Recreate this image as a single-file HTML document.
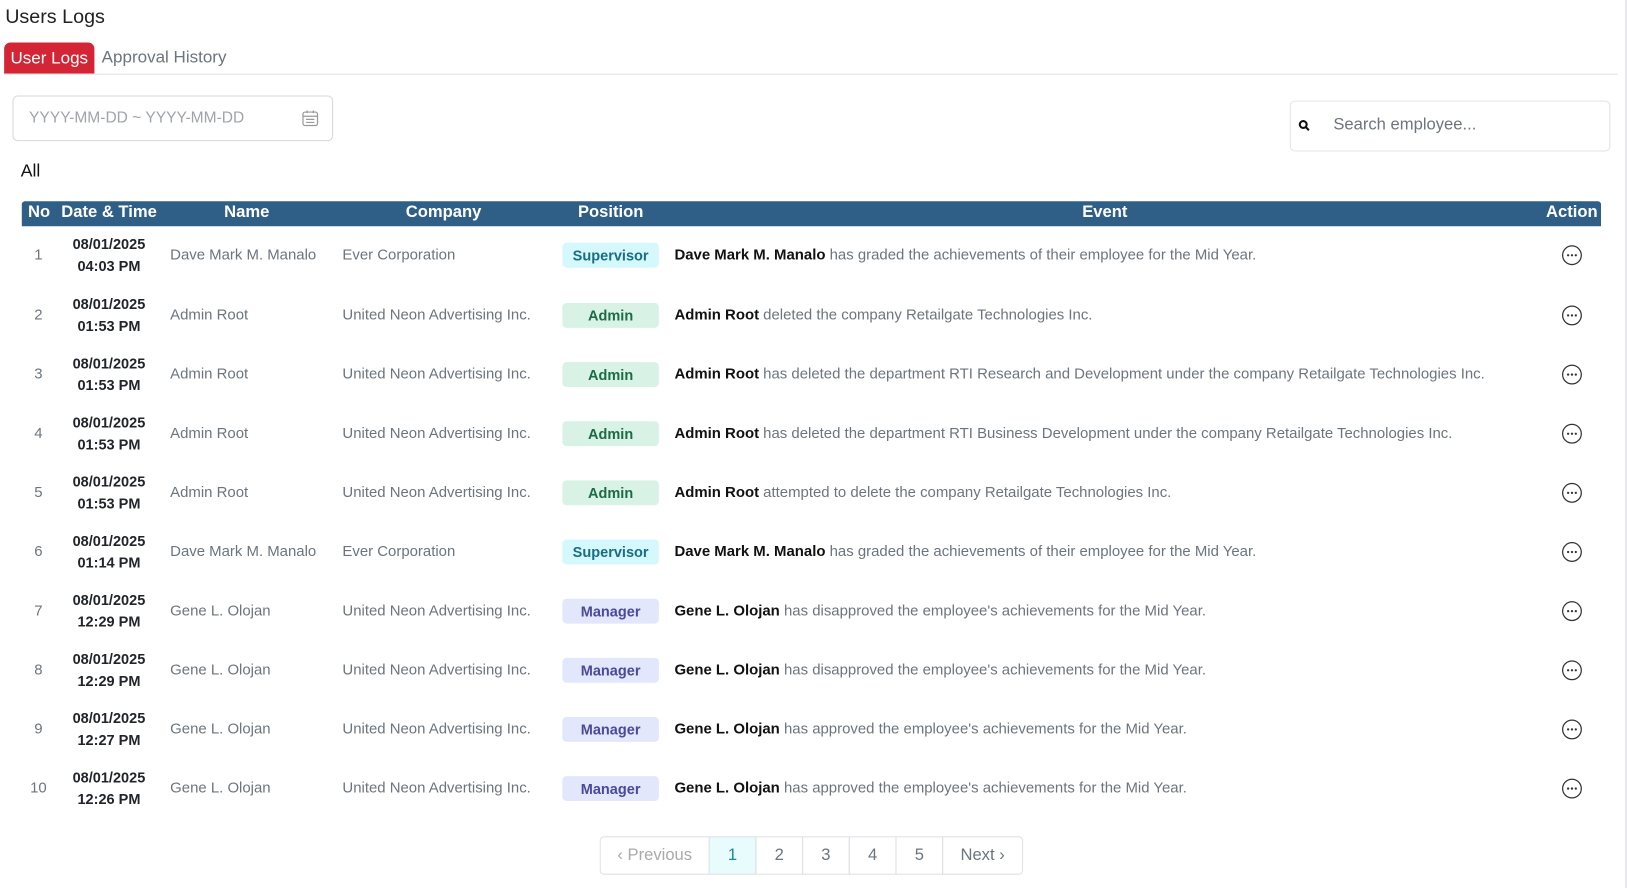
<!DOCTYPE html>
<html><head><meta charset="utf-8"><style>
*{margin:0;padding:0;box-sizing:border-box}
body{width:1627px;height:888px;background:#fff;font-family:"Liberation Sans",sans-serif;position:relative;overflow:hidden;color:#212529}
#w{position:absolute;left:0;top:0;width:1568px;height:856px;transform:scale(1.0376);transform-origin:0 0}
.abs{position:absolute;white-space:nowrap}
.rs{position:absolute;left:1625px;top:0;width:2px;height:888px;background:#e8e6f2}
.hd{position:absolute;left:21px;top:194px;width:1522px;height:24px;background:#2f5f87;border-radius:3px 3px 0 0;color:#fff;font-weight:bold;font-size:16px}
.hd span{position:absolute;top:2px}
.g{color:#6c757d;font-size:14.4px}
.dt{font-weight:bold;font-size:14px;text-align:center;width:94px;line-height:21px}
.b{position:absolute;left:542px;width:93px;height:24px;border-radius:4px;font-size:14px;text-align:center;line-height:24px;font-weight:600}
.sup{background:#d4f8fb;color:#1a6e82}
.adm{background:#d8f3e6;color:#1d6b45}
.man{background:#e2e7fb;color:#4a4a9c}
.ev{font-size:14.4px;color:#6c757d}
.ev b{color:#111;font-weight:bold}
.ac{position:absolute;left:1505px}
.pg{position:absolute;top:806px;height:37px;border:1px solid #dee2e6;font-size:16px;color:#6c757d;text-align:center;line-height:35px}
</style></head><body>
<div class="rs"></div>
<div id="w">
<div class="abs" style="left:5px;top:6px;font-size:19px;color:#222">Users Logs</div>
<div class="abs" style="left:4px;top:41px;width:87px;height:30px;background:#d32535;border-radius:6px 6px 0 0;color:#fff;font-size:16.4px;text-align:center;line-height:30px">User Logs</div>
<div class="abs" style="left:98px;top:46px;font-size:16.4px;color:#6c757d">Approval History</div>
<div class="abs" style="left:4px;top:71px;width:1555px;height:1px;background:#dee2e6"></div>
<div class="abs" style="left:12px;top:92px;width:309px;height:44px;border:1px solid #d7d7dc;border-radius:5px"></div>
<div class="abs" style="left:28px;top:105px;font-size:15px;color:#a0a4a8">YYYY-MM-DD ~ YYYY-MM-DD</div>
<svg class="abs" style="left:290px;top:105px" width="18" height="18" viewBox="0 0 18 18" fill="none" stroke="#999" stroke-width="1.2"><rect x="2" y="3" width="14" height="13" rx="2"/><line x1="2" y1="7" x2="16" y2="7"/><line x1="6" y1="1.5" x2="6" y2="4"/><line x1="12" y1="1.5" x2="12" y2="4"/><line x1="5" y1="10" x2="13" y2="10"/><line x1="5" y1="13" x2="13" y2="13"/></svg>
<div class="abs" style="left:1243px;top:97px;width:309px;height:49px;border:1px solid #e3e3e8;border-radius:5px"></div>
<svg class="abs" style="left:1251px;top:115px" width="12" height="12" viewBox="0 0 12 12" fill="none" stroke="#111" stroke-width="2"><circle cx="5" cy="5" r="3.3"/><line x1="7.5" y1="7.5" x2="10.5" y2="10.5"/></svg>
<div class="abs" style="left:1285px;top:112px;font-size:16px;color:#6c757d">Search employee...</div>
<div class="abs" style="left:20px;top:155px;font-size:17px;color:#111">All</div>
<div class="hd"><span style="left:6px">No</span><span style="left:38px">Date &amp; Time</span><span style="left:195px">Name</span><span style="left:370px">Company</span><span style="left:536px">Position</span><span style="left:1022px">Event</span><span style="left:1469px">Action</span></div>
<div id="rows"></div>
<div class="pg" style="left:578px;width:106px;border-radius:4px 0 0 4px;color:#aaa">‹ Previous</div>
<div class="pg" style="left:683px;width:46px;background:#e8fbfd;color:#1a8aa0">1</div>
<div class="pg" style="left:728px;width:46px">2</div>
<div class="pg" style="left:773px;width:46px">3</div>
<div class="pg" style="left:818px;width:46px">4</div>
<div class="pg" style="left:863px;width:46px">5</div>
<div class="pg" style="left:908px;width:78px;border-radius:0 4px 4px 0">Next ›</div>
</div>
<script>
const R=[
[1,"04:03 PM","Dave Mark M. Manalo","Ever Corporation","sup","Supervisor","has graded the achievements of their employee for the Mid Year."],
[2,"01:53 PM","Admin Root","United Neon Advertising Inc.","adm","Admin","deleted the company Retailgate Technologies Inc."],
[3,"01:53 PM","Admin Root","United Neon Advertising Inc.","adm","Admin","has deleted the department RTI Research and Development under the company Retailgate Technologies Inc."],
[4,"01:53 PM","Admin Root","United Neon Advertising Inc.","adm","Admin","has deleted the department RTI Business Development under the company Retailgate Technologies Inc."],
[5,"01:53 PM","Admin Root","United Neon Advertising Inc.","adm","Admin","attempted to delete the company Retailgate Technologies Inc."],
[6,"01:14 PM","Dave Mark M. Manalo","Ever Corporation","sup","Supervisor","has graded the achievements of their employee for the Mid Year."],
[7,"12:29 PM","Gene L. Olojan","United Neon Advertising Inc.","man","Manager","has disapproved the employee's achievements for the Mid Year."],
[8,"12:29 PM","Gene L. Olojan","United Neon Advertising Inc.","man","Manager","has disapproved the employee's achievements for the Mid Year."],
[9,"12:27 PM","Gene L. Olojan","United Neon Advertising Inc.","man","Manager","has approved the employee's achievements for the Mid Year."],
[10,"12:26 PM","Gene L. Olojan","United Neon Advertising Inc.","man","Manager","has approved the employee's achievements for the Mid Year."]];
const C=[246,304,361,418,475,532,589,646,703,760];
let h="";
R.forEach((r,i)=>{const c=C[i];
h+=`<div class="abs g" style="left:${r[0]<10?33:29}px;top:${c-8}px">${r[0]}</div>
<div class="abs dt" style="left:58px;top:${c-21}px">08/01/2025<br>${r[1]}</div>
<div class="abs g" style="left:164px;top:${c-8}px">${r[2]}</div>
<div class="abs g" style="left:330px;top:${c-8}px">${r[3]}</div>
<div class="b ${r[4]}" style="top:${c-12}px">${r[5]}</div>
<div class="abs ev" style="left:650px;top:${c-8}px"><b>${r[2]}</b> ${r[6]}</div>
<svg class="ac" style="top:${c-10}px" width="20" height="20" viewBox="0 0 20 20"><circle cx="10" cy="10" r="9" fill="none" stroke="#333" stroke-width="1.2"/><circle cx="6.3" cy="10" r="1.1" fill="#333"/><circle cx="10" cy="10" r="1.1" fill="#333"/><circle cx="13.7" cy="10" r="1.1" fill="#333"/></svg>`;});
document.getElementById("rows").innerHTML=h;
</script>
</body></html>
